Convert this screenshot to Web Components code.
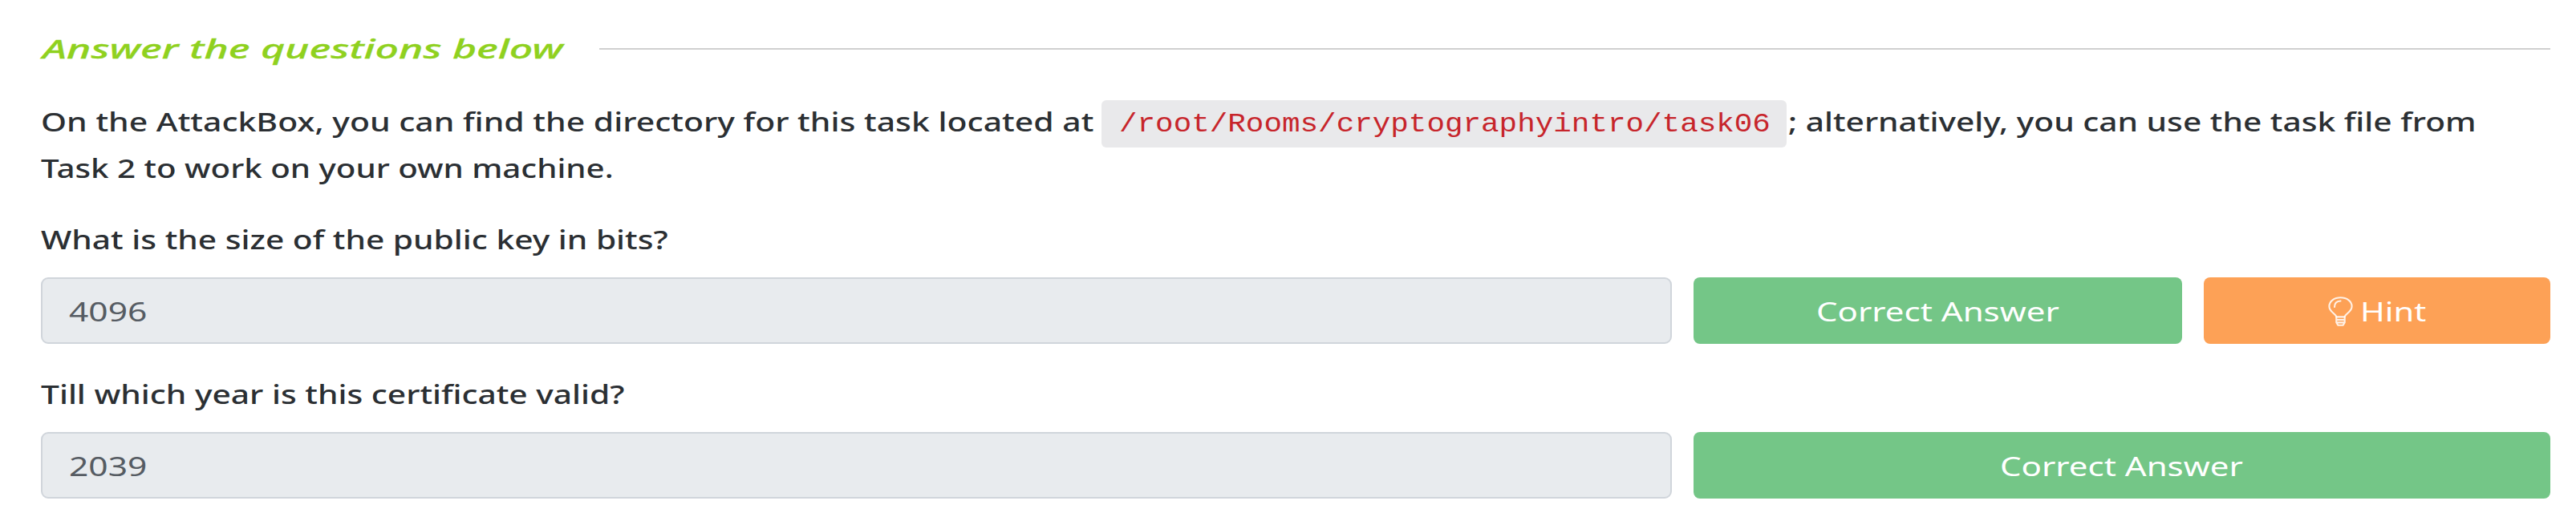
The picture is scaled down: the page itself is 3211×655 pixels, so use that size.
<!DOCTYPE html>
<html lang="en">
<head>
<meta charset="utf-8">
<title>Task questions</title>
<style>
html,body{margin:0;background:#fff}
body{font-family:"Noto Sans","Open Sans",sans-serif;font-size:33px;line-height:58px;color:#2b2f33}
</style>
</head>
<body>
<task-page></task-page>
<script>
const root = (el, html) => { const r = el.attachShadow({mode:"open"}); r.innerHTML = html; return r; };

/* One line of text, widened or narrowed to the width given in pixels. */
customElements.define("fit-text", class extends HTMLElement {
  connectedCallback(){
    const r = root(this, `<style>
      :host{display:block;flex:none;white-space:pre;line-height:inherit}
      span{display:inline-block;transform-origin:0 50%}
    </style><span><slot></slot></span>`);
    const s = r.querySelector("span"), w = +this.getAttribute("w");
    this.style.width = w + "px";
    s.style.transform = `scaleX(${w / s.offsetWidth})`;
  }
});

customElements.define("section-title", class extends HTMLElement {
  connectedCallback(){ root(this, `<style>
    :host{display:flex;align-items:center;height:58px;padding-left:2px;color:#8fd11f;font-style:italic;font-weight:500;font-size:33px;-webkit-text-stroke:.3px #8fd11f}
    i{flex:1;height:2px;background:#d0d0d0;margin-left:46px}
  </style><slot></slot><i></i>`); }
});

customElements.define("text-line", class extends HTMLElement {
  connectedCallback(){ root(this, `<style>:host{display:flex;height:58px;align-items:center;font-weight:500}</style><slot></slot>`); }
});

customElements.define("code-chip", class extends HTMLElement {
  connectedCallback(){ root(this, `<style>
    :host{display:flex;align-items:center;box-sizing:border-box;width:854px;height:59px;margin:5px 2px 0 10px;padding:3px 0 0 22px;
      background:#e9e9eb;border-radius:6px;color:#c7252b;font-family:"Liberation Mono",monospace;font-weight:400;font-size:33px;line-height:50px}
  </style><slot></slot>`); }
});

customElements.define("answer-row", class extends HTMLElement {
  connectedCallback(){ root(this, `<style>:host{display:flex;gap:27px;height:83.4px}</style><slot></slot>`); }
});

customElements.define("answer-field", class extends HTMLElement {
  connectedCallback(){ root(this, `<style>
    :host{display:flex;align-items:center;box-sizing:border-box;width:2032.6px;flex:none;padding:3px 0 0 33px;
      background:#e8ebee;border:2px solid #d0d5db;border-radius:9px;color:#565c63}
  </style><slot></slot>`); }
});

customElements.define("action-button", class extends HTMLElement {
  connectedCallback(){ root(this, `<style>
    :host{display:flex;align-items:center;justify-content:center;box-sizing:border-box;flex:1;padding-top:3px;
      background:#74c687;border-radius:8px;color:#fff}
    :host([kind=hint]){flex:none;width:432.4px;background:#fda156}
  </style><slot></slot>`); }
});

customElements.define("bulb-icon", class extends HTMLElement {
  connectedCallback(){ root(this, `<style>:host{display:block;width:31px;height:37px;margin:0 9px 0 0}svg{display:block}</style>
    <svg width="31" height="37" viewBox="0 0 31 37" fill="none" stroke="#fff" stroke-opacity=".85" stroke-width="2.1" stroke-linecap="round" stroke-linejoin="round">
      <path d="M10.3 25.4C10 21.6 1.4 19.300 1.4 12.200C1.400 5.800 7.700 1.200 15.500 1.200S29.600 5.800 29.600 12.200C29.600 19.300 21 21.600 20.700 25.400Z"/>
      <path d="M8 13C8 8.400 11 5.700 15.500 5.500"/>
      <path d="M10.300 25.400V32.500L12.500 35.800H18.500L20.700 32.500V25.400M10.300 29H20.700M10.300 32.400H20.700"/>
    </svg>`); }
});

customElements.define("task-page", class extends HTMLElement {
  connectedCallback(){ root(this, `<style>
    :host{display:block;box-sizing:border-box;width:3211px;height:655px;padding:32px 32px 0 51px;overflow:hidden}
    .intro{margin-top:33px}
    .q1{margin-top:30.500px}
    .q2{margin-top:33.800px}
    answer-row{margin-top:18px}
  </style>
  <section-title><fit-text w="648">Answer the questions below</fit-text></section-title>
  <text-line class="intro"><fit-text w="1312">On the AttackBox, you can find the directory for this task located at</fit-text><code-chip><fit-text w="812">/root/Rooms/cryptographyintro/task06</fit-text></code-chip><fit-text w="857">; alternatively, you can use the task file from</fit-text></text-line>
  <text-line><fit-text w="714">Task 2 to work on your own machine.</fit-text></text-line>
  <text-line class="q1"><fit-text w="782">What is the size of the public key in bits?</fit-text></text-line>
  <answer-row>
    <answer-field><fit-text w="98">4096</fit-text></answer-field>
    <action-button><fit-text w="303">Correct Answer</fit-text></action-button>
    <action-button kind="hint"><bulb-icon></bulb-icon><fit-text w="82">Hint</fit-text></action-button>
  </answer-row>
  <text-line class="q2"><fit-text w="728">Till which year is this certificate valid?</fit-text></text-line>
  <answer-row>
    <answer-field><fit-text w="98">2039</fit-text></answer-field>
    <action-button><fit-text w="303">Correct Answer</fit-text></action-button>
  </answer-row>`); }
});
</script>
</body>
</html>
